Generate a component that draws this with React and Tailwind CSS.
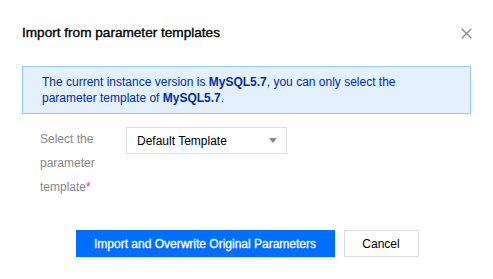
import React from "react";

export default function App() {
  return (
    <div className="w-[493px] h-[279px] bg-white relative" style={{ fontFamily: '"Liberation Sans", Arial, sans-serif' }}>
      <div className="px-[22px] pt-[24px]">
        <div className="flex items-center justify-between h-[18px]">
          <h2 className="text-[13.6px] font-normal text-black leading-[18px] [-webkit-text-stroke:0.35px_#000]">Import from parameter templates</h2>
          <button className="-mr-[1px] w-[11px] h-[11px] flex items-center justify-center">
            <svg width="11" height="11" viewBox="0 0 11 11">
              <path d="M0.7 0.7L10.3 10.3M10.3 0.7L0.7 10.3" stroke="#888" strokeWidth="1.3" />
            </svg>
          </button>
        </div>
        <div className="mt-[24px] h-[48px] border border-[#97c7ff] bg-[#e5f0ff] pl-[19px] pr-[10px] pt-[7px] text-[12px] leading-[16px] text-[#002da0]">
          The current instance version is <b>MySQL5.7</b>, you can only select the
          <br />
          parameter template of <b>MySQL5.7</b>.
        </div>
        <div className="flex mt-[13px] pl-[18px]">
          <div className="w-[86px] text-[12px] leading-[24px] text-[#888]">
            Select the
            <br />
            parameter
            <br />
            template<span className="text-[#e54545]">*</span>
          </div>
          <div className="w-[161px] h-[27px] border border-[#ddd] flex items-center justify-between pl-[10px] pr-[9px] text-[12px] text-black">
            <span>Default Template</span>
            <svg width="8" height="5" viewBox="0 0 8 5">
              <path d="M0 0H8L4 5Z" fill="#888" />
            </svg>
          </div>
        </div>
      </div>
      <div className="flex justify-center gap-[9px] mt-[31px] pl-[1px]">
        <button className="w-[259px] h-[27px] bg-[#006eff] text-white text-[12px] font-normal [-webkit-text-stroke:0.3px_#fff]">
          Import and Overwrite Original Parameters
        </button>
        <button className="w-[75px] h-[27px] border border-[#ddd] bg-white text-black text-[12px]">
          Cancel
        </button>
      </div>
    </div>
  );
}
